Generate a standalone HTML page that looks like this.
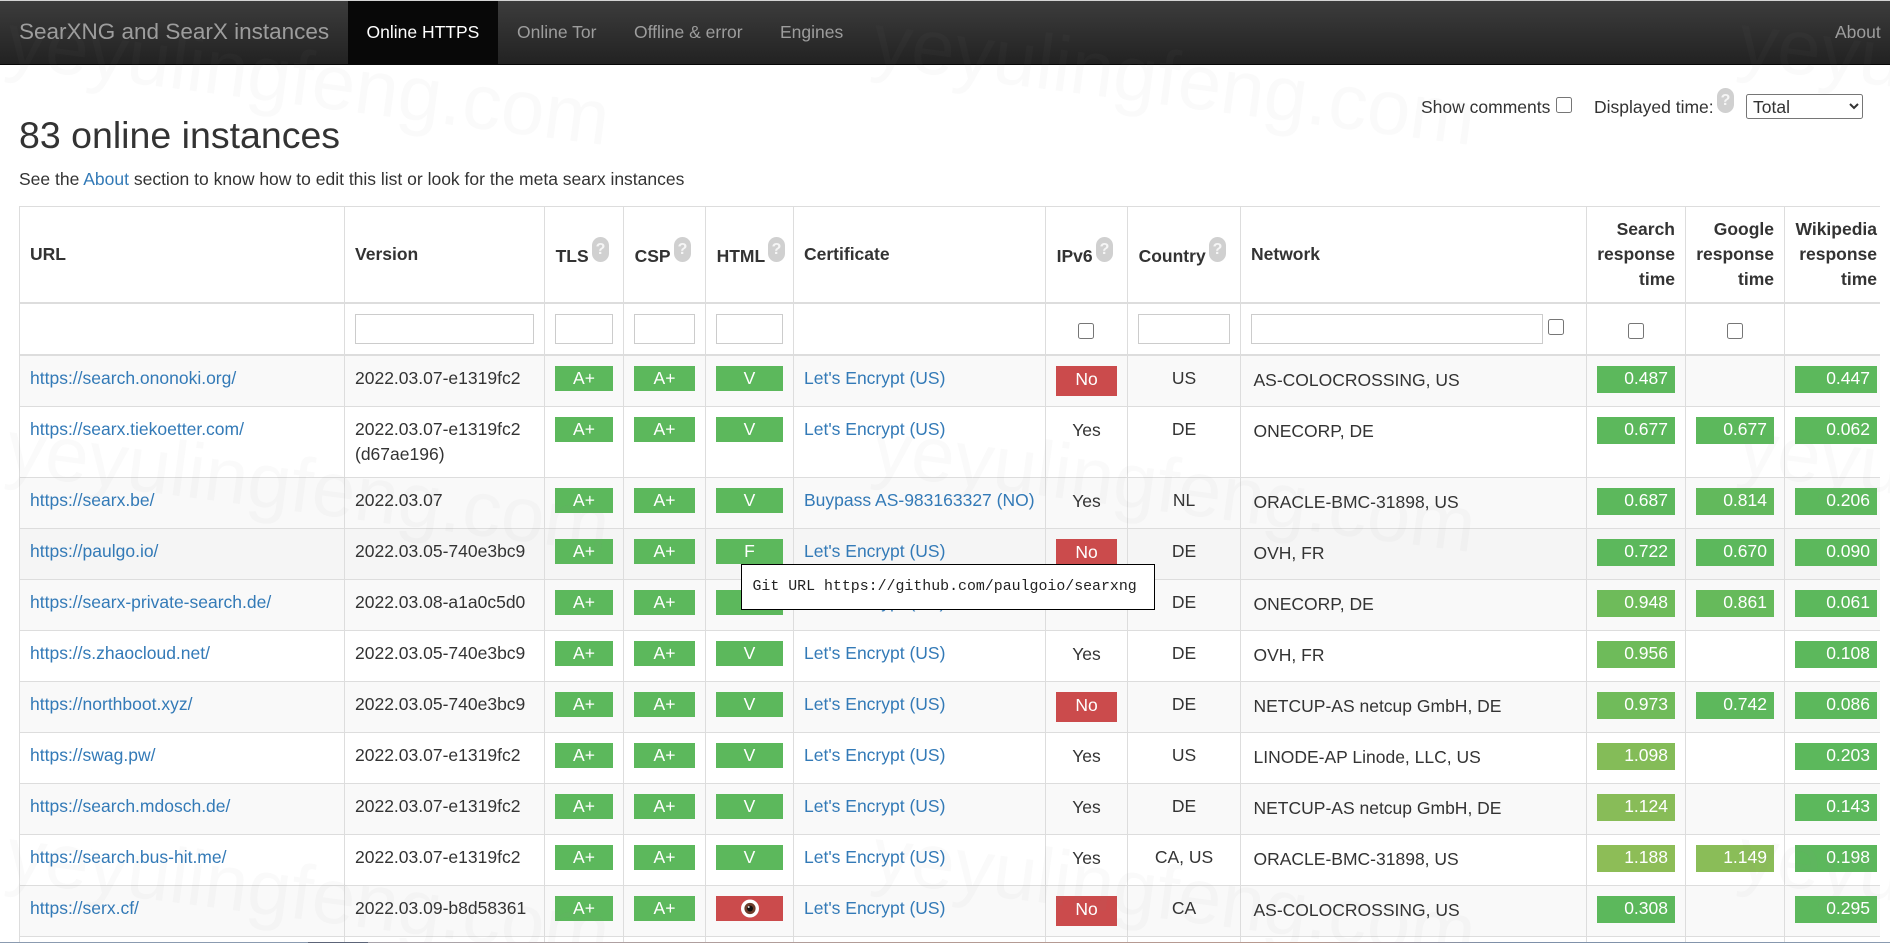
<!DOCTYPE html>
<html><head><meta charset="utf-8"><title>SearXNG and SearX instances</title>
<style>
*{box-sizing:border-box}
html,body{margin:0;padding:0;width:1890px;height:943px;overflow:hidden;background:#fff}
body{font-family:"Liberation Sans",Arial,sans-serif;font-size:17.5px;line-height:25px;color:#333;position:relative}
a{color:#337ab7;text-decoration:none}
nav{position:absolute;left:0;top:0;width:1890px;height:65px;background:linear-gradient(#3c3c3c,#222);border-top:1px solid #d4d4d4;border-bottom:1px solid #080808}
nav a{position:absolute;top:19px;color:#9d9d9d;white-space:nowrap}
nav .brand{left:19px;top:18px;font-size:22.5px}
nav .act{position:absolute;left:348px;top:0;width:150px;height:63px;background:#080808}
nav .act a{left:18.5px;color:#fff}
h1{position:absolute;left:19px;top:113px;margin:0;font-size:37.5px;line-height:45px;font-weight:400;white-space:nowrap}
p{position:absolute;left:19px;top:167px;margin:0;white-space:nowrap}
.top{position:absolute;white-space:nowrap}
input[type=checkbox]{position:absolute;width:16px;height:16px;margin:0}
select{position:absolute;left:1746px;top:94px;width:117px;height:25px;font:17.5px "Liberation Sans",Arial,sans-serif;color:#333;background:#fff;border:1px solid #767676;border-radius:2.5px;padding:0 0 0 2px}
.h{position:absolute;width:17px;height:25px;border-radius:8.5px;background:#d0d0d0;color:#f6f6f6;font-size:16px;font-weight:700;line-height:25px;text-align:center}
#w{position:absolute;left:19px;top:206px;width:1861px;height:737px;overflow:hidden}
table{border-collapse:separate;border-spacing:0;table-layout:fixed;width:1868px}
th,td{position:relative;border-left:1px solid #ddd;border-bottom:1px solid #ddd;padding:10px;vertical-align:top;font-weight:400;height:51px}
.hd th{border-top:1px solid #ddd;border-bottom:2px solid #ddd;height:98px;vertical-align:middle;text-align:left;font-weight:700}
.hd th.r{text-align:right}
.hd th span.t{position:relative;top:2px;left:.6px}
.f td{border-bottom:2px solid #ddd;height:52px}
.f input[type=text]{position:absolute;left:10px;top:10px;height:29.5px;border:1px solid #ccc;background:#fff;padding:0;margin:0;outline:0}
tr.o td{background:#f9f9f9}
tr.hv td{background:#f5f5f5}
tr.tall td{height:71px}
.c{text-align:center}
.b{display:block;height:25px;line-height:25px;background:#5cb85c;color:#fff;text-align:center}
.rd{background:#cb4b4c}
.no{display:block;height:30px;padding-top:1.25px;background:#cb4b4c;color:#fff;text-align:center}
.y{display:block;padding-top:1.25px;text-align:center}
.n{display:block;height:27px;line-height:25px;background:#5cb85c;color:#fff;text-align:right;padding-right:7px}
.net{padding:11.6px 10px 10px 12.5px}
svg.eye{display:block;position:absolute;left:24.5px;top:0}
#tip{position:absolute;left:741px;top:564px;width:414px;height:46px;border:1px solid #000;background:#fff;color:#222;font-family:"Liberation Mono",monospace;font-size:14.9px;line-height:44px;padding-left:10.5px;white-space:nowrap}
#wm{position:absolute;left:0;top:0;pointer-events:none}
#wm text{font-family:"Liberation Sans",Arial,sans-serif;font-size:78px;fill:rgba(150,150,150,.045)}
#bar{position:absolute;left:0;top:942px;width:1890px;height:1px;background:linear-gradient(90deg,#8b9bb0 0,#8b9bb0 308px,#5c6478 308px,#5c6478 368px,#a9a5ac 368px,#b39b95 900px,#b89a90 1300px,#7d8fa8 1500px,#8b9bb0 100%)}
</style></head><body>
<nav>
<a class="brand" href="#">SearXNG and SearX instances</a>
<div class="act"><a href="#">Online HTTPS</a></div>
<a href="#" style="left:517px">Online Tor</a>
<a href="#" style="left:634px">Offline &amp; error</a>
<a href="#" style="left:780px">Engines</a>
<a href="#" style="left:1835px">About</a>
</nav>
<div class="top" style="left:1421px;top:95px">Show comments</div>
<input type="checkbox" style="left:1556px;top:97px">
<div class="top" style="left:1594px;top:95px">Displayed time:</div>
<span class="h" style="left:1717px;top:88px">?</span>
<select><option>Total</option></select>
<h1>83 online instances</h1>
<p>See the <a href="#">About</a> section to know how to edit this list or look for the meta searx instances</p>
<div id="w"><table>
<colgroup><col style="width:325px"><col style="width:200px"><col style="width:79px"><col style="width:82px"><col style="width:88px"><col style="width:252px"><col style="width:82px"><col style="width:113px"><col style="width:346px"><col style="width:99px"><col style="width:99px"><col style="width:103px"></colgroup>
<tr class="hd"><th>URL</th><th>Version</th>
<th><span class="t">TLS</span><span class="h" style="left:47px;top:30px">?</span></th>
<th><span class="t">CSP</span><span class="h" style="left:50px;top:30px">?</span></th>
<th><span class="t">HTML</span><span class="h" style="left:62px;top:30px">?</span></th>
<th>Certificate</th>
<th><span class="t">IPv6</span><span class="h" style="left:50px;top:30px">?</span></th>
<th><span class="t">Country</span><span class="h" style="left:81px;top:30px">?</span></th>
<th>Network</th>
<th class="r">Search response time</th><th class="r">Google response time</th><th class="r">Wikipedia response time</th></tr>
<tr class="f"><td></td>
<td><input type="text" style="width:179px"></td>
<td><input type="text" style="width:58px"></td>
<td><input type="text" style="width:61px"></td>
<td><input type="text" style="width:67px"></td>
<td></td>
<td><input type="checkbox" style="left:32px;top:19px"></td>
<td><input type="text" style="width:92px"></td>
<td><input type="text" style="width:292px"><input type="checkbox" style="left:307px;top:15px"></td>
<td><input type="checkbox" style="left:41px;top:19px"></td>
<td><input type="checkbox" style="left:41px;top:19px"></td>
<td></td></tr>

<tr class="o"><td><a href="#">https://search.ononoki.org/</a></td><td>2022.03.07-e1319fc2</td><td><span class="b">A+</span></td><td><span class="b">A+</span></td><td><span class="b">V</span></td><td><a href="#">Let's Encrypt (US)</a></td><td><span class="no">No</span></td><td class="c">US</td><td class="net">AS-COLOCROSSING, US</td><td><span class="n" style="background:#5cb85c">0.487</span></td><td></td><td><span class="n">0.447</span></td></tr>

<tr class="tall"><td><a href="#">https://searx.tiekoetter.com/</a></td><td>2022.03.07-e1319fc2<br>(d67ae196)</td><td><span class="b">A+</span></td><td><span class="b">A+</span></td><td><span class="b">V</span></td><td><a href="#">Let's Encrypt (US)</a></td><td><span class="y">Yes</span></td><td class="c">DE</td><td class="net">ONECORP, DE</td><td><span class="n">0.677</span></td><td><span class="n">0.677</span></td><td><span class="n">0.062</span></td></tr>

<tr class="o"><td><a href="#">https://searx.be/</a></td><td>2022.03.07</td><td><span class="b">A+</span></td><td><span class="b">A+</span></td><td><span class="b">V</span></td><td><a href="#">Buypass AS-983163327 (NO)</a></td><td><span class="y">Yes</span></td><td class="c">NL</td><td class="net">ORACLE-BMC-31898, US</td><td><span class="n">0.687</span></td><td><span class="n" style="background:#62b95c">0.814</span></td><td><span class="n">0.206</span></td></tr>

<tr class="hv"><td><a href="#">https://paulgo.io/</a></td><td>2022.03.05-740e3bc9</td><td><span class="b">A+</span></td><td><span class="b">A+</span></td><td><span class="b">F</span></td><td><a href="#">Let's Encrypt (US)</a></td><td><span class="no">No</span></td><td class="c">DE</td><td class="net">OVH, FR</td><td><span class="n">0.722</span></td><td><span class="n">0.670</span></td><td><span class="n">0.090</span></td></tr>

<tr class="o"><td><a href="#">https://searx-private-search.de/</a></td><td>2022.03.08-a1a0c5d0</td><td><span class="b">A+</span></td><td><span class="b">A+</span></td><td><span class="b">V</span></td><td><a href="#">Let's Encrypt (US)</a></td><td><span class="y">Yes</span></td><td class="c">DE</td><td class="net">ONECORP, DE</td><td><span class="n" style="background:#6ebb5a">0.948</span></td><td><span class="n" style="background:#66ba5b">0.861</span></td><td><span class="n">0.061</span></td></tr>

<tr><td><a href="#">https://s.zhaocloud.net/</a></td><td>2022.03.05-740e3bc9</td><td><span class="b">A+</span></td><td><span class="b">A+</span></td><td><span class="b">V</span></td><td><a href="#">Let's Encrypt (US)</a></td><td><span class="y">Yes</span></td><td class="c">DE</td><td class="net">OVH, FR</td><td><span class="n" style="background:#6ebb5a">0.956</span></td><td></td><td><span class="n">0.108</span></td></tr>

<tr class="o"><td><a href="#">https://northboot.xyz/</a></td><td>2022.03.05-740e3bc9</td><td><span class="b">A+</span></td><td><span class="b">A+</span></td><td><span class="b">V</span></td><td><a href="#">Let's Encrypt (US)</a></td><td><span class="no">No</span></td><td class="c">DE</td><td class="net">NETCUP-AS netcup GmbH, DE</td><td><span class="n" style="background:#70bb5a">0.973</span></td><td><span class="n" style="background:#5db85c">0.742</span></td><td><span class="n">0.086</span></td></tr>

<tr><td><a href="#">https://swag.pw/</a></td><td>2022.03.07-e1319fc2</td><td><span class="b">A+</span></td><td><span class="b">A+</span></td><td><span class="b">V</span></td><td><a href="#">Let's Encrypt (US)</a></td><td><span class="y">Yes</span></td><td class="c">US</td><td class="net">LINODE-AP Linode, LLC, US</td><td><span class="n" style="background:#84bc58">1.098</span></td><td></td><td><span class="n">0.203</span></td></tr>

<tr class="o"><td><a href="#">https://search.mdosch.de/</a></td><td>2022.03.07-e1319fc2</td><td><span class="b">A+</span></td><td><span class="b">A+</span></td><td><span class="b">V</span></td><td><a href="#">Let's Encrypt (US)</a></td><td><span class="y">Yes</span></td><td class="c">DE</td><td class="net">NETCUP-AS netcup GmbH, DE</td><td><span class="n" style="background:#88bc58">1.124</span></td><td></td><td><span class="n">0.143</span></td></tr>

<tr><td><a href="#">https://search.bus-hit.me/</a></td><td>2022.03.07-e1319fc2</td><td><span class="b">A+</span></td><td><span class="b">A+</span></td><td><span class="b">V</span></td><td><a href="#">Let's Encrypt (US)</a></td><td><span class="y">Yes</span></td><td class="c">CA, US</td><td class="net">ORACLE-BMC-31898, US</td><td><span class="n" style="background:#8dbd57">1.188</span></td><td><span class="n" style="background:#8abd58">1.149</span></td><td><span class="n">0.198</span></td></tr>

<tr class="o"><td><a href="#">https://serx.cf/</a></td><td>2022.03.09-b8d58361</td><td><span class="b">A+</span></td><td><span class="b">A+</span></td><td><span class="b rd" style="position:relative"><svg class="eye" width="18" height="25" viewBox="0 0 18 25"><ellipse cx="9" cy="12.5" rx="9" ry="9" fill="#fff"/><circle cx="9" cy="12.5" r="5.6" fill="#6d3c2b"/><circle cx="9" cy="12.5" r="3" fill="#111"/><circle cx="7.7" cy="11" r="1" fill="#ddd"/></svg></span></td><td><a href="#">Let's Encrypt (US)</a></td><td><span class="no">No</span></td><td class="c">CA</td><td class="net">AS-COLOCROSSING, US</td><td><span class="n">0.308</span></td><td></td><td><span class="n">0.295</span></td></tr>

<tr><td></td><td></td><td></td><td></td><td></td><td></td><td></td><td></td><td></td><td></td><td></td><td></td></tr>
</table></div>
<div id="tip">Git URL https://github.com/paulgoio/searxng</div>
<svg id="wm" width="1890" height="943" viewBox="0 0 1890 943">
<text transform="translate(4 66) rotate(7.5)">yeyulingfeng.com</text>
<text transform="translate(870 66) rotate(7.5)">yeyulingfeng.com</text>
<text transform="translate(1736 66) rotate(7.5)">yeyulingfeng.com</text>
<text transform="translate(4 473) rotate(7.5)">yeyulingfeng.com</text>
<text transform="translate(870 473) rotate(7.5)">yeyulingfeng.com</text>
<text transform="translate(1736 473) rotate(7.5)">yeyulingfeng.com</text>
<text transform="translate(4 880) rotate(7.5)">yeyulingfeng.com</text>
<text transform="translate(870 880) rotate(7.5)">yeyulingfeng.com</text>
<text transform="translate(1736 880) rotate(7.5)">yeyulingfeng.com</text>
</svg>
<div id="bar"></div>
</body></html>
